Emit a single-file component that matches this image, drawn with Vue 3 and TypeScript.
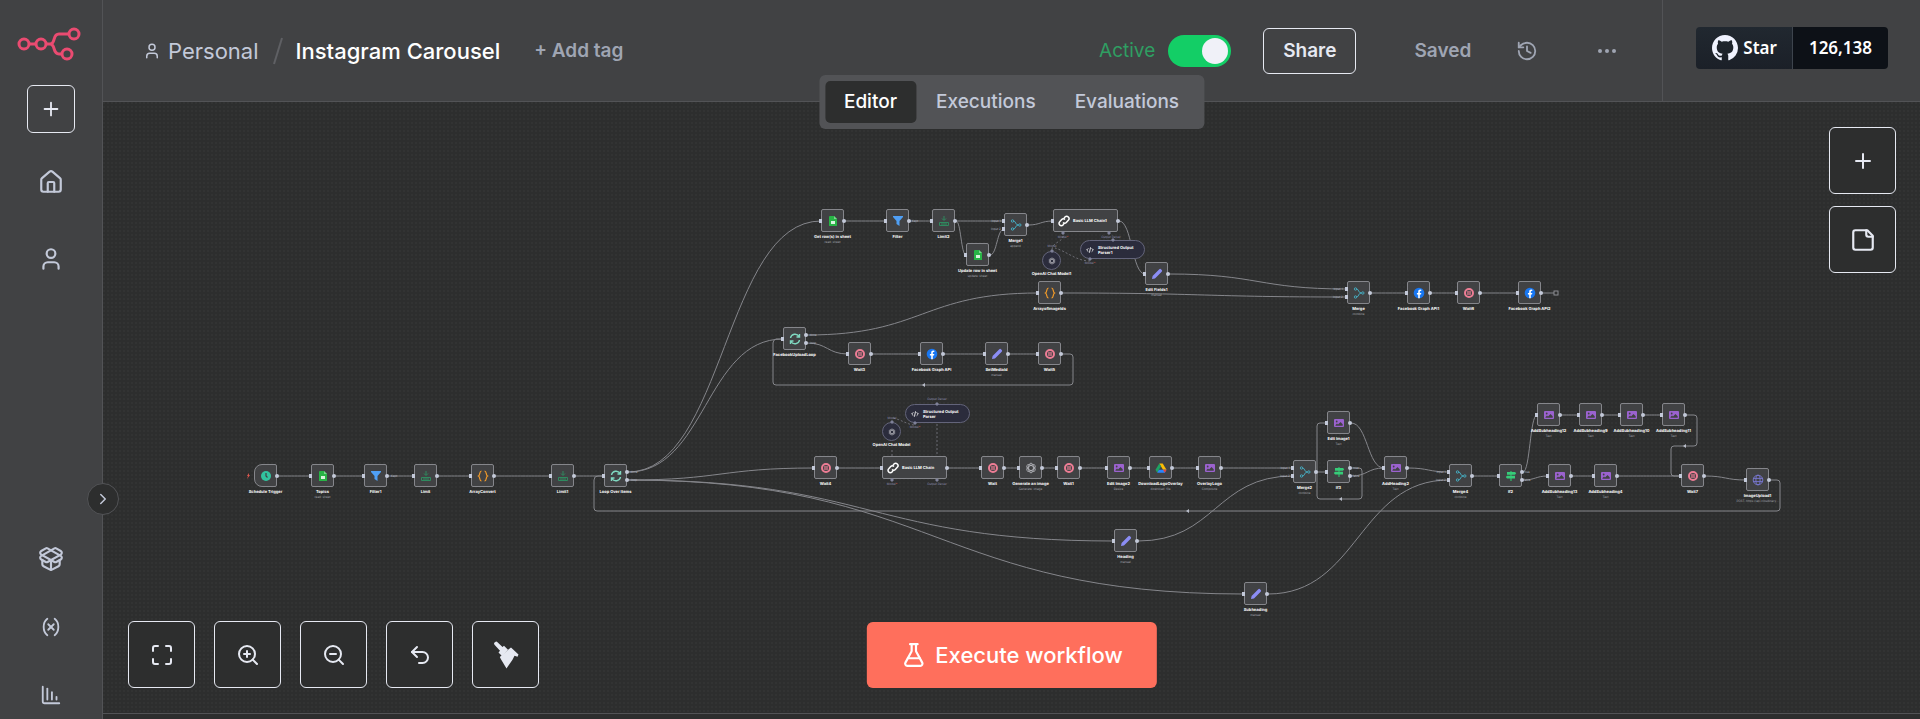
<script setup lang="ts">
import { computed, ref } from 'vue'

type Shape = 'box' | 'trigger' | 'wide' | 'circle' | 'pill'

interface FlowNode {
  id: string
  x: number
  y: number
  icon: string
  label: string
  sub?: string
  shape?: Shape
  ins?: number[]
  outs?: number[]
}

interface Edge {
  from: string
  to: string
  out?: number
  into?: number
}

interface Caption {
  x: number
  y: number
  text: string
  required?: boolean
}

const active = ref(true)
const tab = ref('Editor')
const tabs: string[] = ['Editor', 'Executions', 'Evaluations']

const icons: Record<string, string[]> = {
  plus: ['M5 12h14', 'M12 5v14'],
  home: [
    'M15 21v-8a1 1 0 0 0-1-1h-4a1 1 0 0 0-1 1v8',
    'M3 10a2 2 0 0 1 .709-1.528l7-5.999a2 2 0 0 1 2.582 0l7 5.999A2 2 0 0 1 21 10v9a2 2 0 0 1-2 2H5a2 2 0 0 1-2-2z',
  ],
  user: ['M19 21v-2a4 4 0 0 0-4-4H9a4 4 0 0 0-4 4v2', 'M8 7a4 4 0 1 0 8 0a4 4 0 1 0-8 0'],
  templates: [
    'M12 22v-9',
    'M15.17 2.21a1.67 1.67 0 0 1 1.63 0L21 4.57a1.93 1.93 0 0 1 0 3.36L8.82 14.79a1.655 1.655 0 0 1-1.64 0L3 12.43a1.93 1.93 0 0 1 0-3.36z',
    'M20 13v3.87a2.06 2.06 0 0 1-1.11 1.83l-6 3.08a1.93 1.93 0 0 1-1.78 0l-6-3.08A2.06 2.06 0 0 1 4 16.87V13',
    'M21 12.43a1.93 1.93 0 0 0 0-3.36L8.83 2.2a1.64 1.64 0 0 0-1.63 0L3 4.57a1.93 1.93 0 0 0 0 3.36l12.18 6.86a1.636 1.636 0 0 0 1.63 0z',
  ],
  variables: ['M8 21s-4-3-4-9 4-9 4-9', 'M16 3s4 3 4 9-4 9-4 9', 'M15 9l-6 6', 'M9 9l6 6'],
  insights: ['M13 17V9', 'M18 17v-3', 'M3 3v16a2 2 0 0 0 2 2h16', 'M8 17V5'],
  history: ['M3 12a9 9 0 1 0 9-9 9.75 9.75 0 0 0-6.74 2.74L3 8', 'M3 3v5h5', 'M12 7v5l4 2'],
  fit: [
    'M8 3H5a2 2 0 0 0-2 2v3',
    'M21 8V5a2 2 0 0 0-2-2h-3',
    'M3 16v3a2 2 0 0 0 2 2h3',
    'M16 21h3a2 2 0 0 0 2-2v-3',
  ],
  zoomIn: ['M3 11a8 8 0 1 0 16 0a8 8 0 1 0-16 0', 'M21 21l-4.35-4.35', 'M11 8v6', 'M8 11h6'],
  zoomOut: ['M3 11a8 8 0 1 0 16 0a8 8 0 1 0-16 0', 'M21 21l-4.35-4.35', 'M8 11h6'],
  undo: ['M9 14 4 9l5-5', 'M4 9h10.5a5.5 5.5 0 0 1 5.5 5.5a5.5 5.5 0 0 1-5.5 5.5H11'],
  note: ['M16 3H5a2 2 0 0 0-2 2v14a2 2 0 0 0 2 2h14a2 2 0 0 0 2-2V8Z', 'M15 3v4a2 2 0 0 0 2 2h4'],
  flask: [
    'M14 2v6a2 2 0 0 0 .245.96l5.51 10.08A2 2 0 0 1 18 22H6a2 2 0 0 1-1.755-2.96l5.51-10.08A2 2 0 0 0 10 8V2',
    'M6.453 15h11.094',
    'M8.5 2h7',
  ],
  chevron: ['M9 18l6-6-6-6'],
}

const topMenu = [
  { icon: 'home', label: 'Overview' },
  { icon: 'user', label: 'Personal' },
]
const bottomMenu = [
  { icon: 'templates', label: 'Templates' },
  { icon: 'variables', label: 'Variables' },
  { icon: 'insights', label: 'Insights' },
]
const controls = [
  { icon: 'fit', label: 'Zoom to fit' },
  { icon: 'zoomIn', label: 'Zoom in' },
  { icon: 'zoomOut', label: 'Zoom out' },
  { icon: 'undo', label: 'Reset zoom' },
]

const nodes: FlowNode[] = [
  { id: 'schedule', x: 266, y: 476, icon: 'clock', label: 'Schedule Trigger', shape: 'trigger', ins: [] },
  { id: 'topics', x: 323, y: 476, icon: 'sheet', label: 'Topics', sub: 'read: sheet' },
  { id: 'filter1', x: 376, y: 476, icon: 'filter', label: 'Filter1' },
  { id: 'limit', x: 426, y: 476, icon: 'limit', label: 'Limit' },
  { id: 'array', x: 483, y: 476, icon: 'braces', label: 'ArrayConvert' },
  { id: 'limit1', x: 563, y: 476, icon: 'limit', label: 'Limit1' },
  { id: 'loop', x: 616, y: 476, icon: 'loop', label: 'Loop Over Items', outs: [-4, 4] },

  { id: 'getrows', x: 833, y: 221, icon: 'sheet', label: 'Get row(s) in sheet', sub: 'read: sheet' },
  { id: 'filter', x: 898, y: 221, icon: 'filter', label: 'Filter' },
  { id: 'limit2', x: 944, y: 221, icon: 'limit', label: 'Limit2' },
  { id: 'update', x: 978, y: 255, icon: 'sheet', label: 'Update row in sheet', sub: 'update: sheet' },
  { id: 'merge1', x: 1016, y: 225, icon: 'merge', label: 'Merge1', sub: 'append', ins: [-4, 4] },
  { id: 'chain1', x: 1086, y: 221, icon: 'link', label: 'Basic LLM Chain1', shape: 'wide' },
  { id: 'model1', x: 1052, y: 261, icon: 'openai', label: 'OpenAI Chat Model1', shape: 'circle', ins: [], outs: [] },
  { id: 'parser1', x: 1113, y: 250, icon: 'code', label: 'Structured Output Parser1', shape: 'pill', ins: [], outs: [] },
  { id: 'fields1', x: 1157, y: 274, icon: 'pencil', label: 'Edit Fields1', sub: 'manual' },
  { id: 'arrayids', x: 1050, y: 293, icon: 'braces', label: 'ArrayofImageIds' },
  { id: 'merge', x: 1359, y: 293, icon: 'merge', label: 'Merge', sub: 'combine', ins: [-4, 4] },
  { id: 'fb1', x: 1419, y: 293, icon: 'facebook', label: 'Facebook Graph API1' },
  { id: 'wait6', x: 1469, y: 293, icon: 'pause', label: 'Wait6' },
  { id: 'fb2', x: 1530, y: 293, icon: 'facebook', label: 'Facebook Graph API2' },

  { id: 'fbloop', x: 795, y: 339, icon: 'loop', label: 'FacebookUploadLoop', outs: [-4, 4] },
  { id: 'wait3', x: 860, y: 354, icon: 'pause', label: 'Wait3' },
  { id: 'fb', x: 932, y: 354, icon: 'facebook', label: 'Facebook Graph API' },
  { id: 'media', x: 997, y: 354, icon: 'pencil', label: 'SetMediaId', sub: 'manual' },
  { id: 'wait5', x: 1050, y: 354, icon: 'pause', label: 'Wait5' },

  { id: 'parser', x: 938, y: 414, icon: 'code', label: 'Structured Output Parser', shape: 'pill', ins: [], outs: [] },
  { id: 'model', x: 892, y: 432, icon: 'openai', label: 'OpenAI Chat Model', shape: 'circle', ins: [], outs: [] },
  { id: 'wait4', x: 826, y: 468, icon: 'pause', label: 'Wait4' },
  { id: 'chain', x: 915, y: 468, icon: 'link', label: 'Basic LLM Chain', shape: 'wide' },
  { id: 'wait', x: 993, y: 468, icon: 'pause', label: 'Wait' },
  { id: 'generate', x: 1031, y: 468, icon: 'openai', label: 'Generate an image', sub: 'Generate: image' },
  { id: 'wait1', x: 1069, y: 468, icon: 'pause', label: 'Wait1' },
  { id: 'image2', x: 1119, y: 468, icon: 'image', label: 'Edit Image2', sub: 'Resize' },
  { id: 'drive', x: 1161, y: 468, icon: 'drive', label: 'DownloadLogoOverlay', sub: 'download: file' },
  { id: 'overlay', x: 1210, y: 468, icon: 'image', label: 'OverlayLogo', sub: 'Composite' },
  { id: 'merge2', x: 1305, y: 472, icon: 'merge', label: 'Merge2', sub: 'combine', ins: [-4, 4] },
  { id: 'image1', x: 1339, y: 423, icon: 'image', label: 'Edit Image1', sub: 'Text' },
  { id: 'if3', x: 1339, y: 472, icon: 'sign', label: 'If3', outs: [-4, 4] },
  { id: 'heading2', x: 1396, y: 468, icon: 'image', label: 'AddHeading2', sub: 'Text' },
  { id: 'merge4', x: 1461, y: 476, icon: 'merge', label: 'Merge4', sub: 'combine', ins: [-4, 4] },
  { id: 'if', x: 1511, y: 476, icon: 'sign', label: 'If2', outs: [-4, 4] },
  { id: 'sub10', x: 1549, y: 415, icon: 'image', label: 'AddSubheading12', sub: 'Text' },
  { id: 'sub9', x: 1591, y: 415, icon: 'image', label: 'AddSubheading9', sub: 'Text' },
  { id: 'sub12', x: 1632, y: 415, icon: 'image', label: 'AddSubheading10', sub: 'Text' },
  { id: 'sub11', x: 1674, y: 415, icon: 'image', label: 'AddSubheading11', sub: 'Text' },
  { id: 'sub13', x: 1560, y: 476, icon: 'image', label: 'AddSubheading13', sub: 'Text' },
  { id: 'sub4', x: 1606, y: 476, icon: 'image', label: 'AddSubheading4', sub: 'Text' },
  { id: 'wait7', x: 1693, y: 476, icon: 'pause', label: 'Wait7' },
  { id: 'upload', x: 1758, y: 480, icon: 'globe', label: 'ImageUpload1', sub: 'POST: https://api.cloudinary...' },
  { id: 'heading', x: 1126, y: 541, icon: 'pencil', label: 'Heading', sub: 'manual' },
  { id: 'subheading', x: 1256, y: 594, icon: 'pencil', label: 'Subheading', sub: 'manual' },
]

const edges: Edge[] = [
  { from: 'schedule', to: 'topics' },
  { from: 'topics', to: 'filter1' },
  { from: 'filter1', to: 'limit' },
  { from: 'limit', to: 'array' },
  { from: 'array', to: 'limit1' },
  { from: 'limit1', to: 'loop' },
  { from: 'loop', to: 'getrows', out: -4 },
  { from: 'loop', to: 'fbloop', out: -4 },
  { from: 'loop', to: 'wait4', out: 4 },
  { from: 'loop', to: 'heading', out: 4 },
  { from: 'loop', to: 'subheading', out: 4 },
  { from: 'getrows', to: 'filter' },
  { from: 'filter', to: 'limit2' },
  { from: 'limit2', to: 'merge1', into: -4 },
  { from: 'limit2', to: 'update' },
  { from: 'update', to: 'merge1', into: 4 },
  { from: 'merge1', to: 'chain1' },
  { from: 'chain1', to: 'fields1' },
  { from: 'fields1', to: 'merge', into: -4 },
  { from: 'arrayids', to: 'merge', into: 4 },
  { from: 'merge', to: 'fb1' },
  { from: 'fb1', to: 'wait6' },
  { from: 'wait6', to: 'fb2' },
  { from: 'fbloop', to: 'arrayids', out: -4 },
  { from: 'fbloop', to: 'wait3', out: 4 },
  { from: 'wait3', to: 'fb' },
  { from: 'fb', to: 'media' },
  { from: 'media', to: 'wait5' },
  { from: 'wait4', to: 'chain' },
  { from: 'chain', to: 'wait' },
  { from: 'wait', to: 'generate' },
  { from: 'generate', to: 'wait1' },
  { from: 'wait1', to: 'image2' },
  { from: 'image2', to: 'drive' },
  { from: 'drive', to: 'overlay' },
  { from: 'overlay', to: 'merge2', into: -4 },
  { from: 'heading', to: 'merge2', into: 4 },
  { from: 'merge2', to: 'if3' },
  { from: 'image1', to: 'heading2' },
  { from: 'if3', to: 'heading2', out: 4 },
  { from: 'heading2', to: 'merge4', into: -4 },
  { from: 'subheading', to: 'merge4', into: 4 },
  { from: 'merge4', to: 'if' },
  { from: 'if', to: 'sub10', out: -4 },
  { from: 'if', to: 'sub13', out: 4 },
  { from: 'sub10', to: 'sub9' },
  { from: 'sub9', to: 'sub12' },
  { from: 'sub12', to: 'sub11' },
  { from: 'sub13', to: 'sub4' },
  { from: 'sub4', to: 'wait7' },
  { from: 'wait7', to: 'upload' },
]

/* Edges that run backwards or turn corners */
const routed: string[] = [
  'M1770 480H1777Q1780 480 1780 483V508Q1780 511 1777 511H597Q594 511 594 508V480Q594 476 598 476H604',
  'M1062 354H1070Q1073 354 1073 357V382Q1073 385 1070 385H776Q773 385 773 382V343Q773 340 776 339H783',
  'M1351 468H1359Q1362 468 1362 471V496Q1362 499 1359 499H1320Q1317 499 1317 496V472',
  'M1317 472V426Q1317 423 1320 423H1327',
  'M1686 415H1694Q1697 415 1697 418V443Q1697 446 1694 446H1674Q1671 446 1671 449V473Q1671 476 1674 476H1681',
  'M1542 293H1554',
]

const dashed: string[] = [
  'M1063 236C1063 242 1052 242 1052 250',
  'M1090 261C1076 261 1066 251 1055 248',
  'M937 424V456',
  'M892 450V456',
  'M914 425C906 424 902 420 893 418',
]

const arrows = [
  { x: 1188, y: 511 },
  { x: 924, y: 385 },
  { x: 1341, y: 499 },
  { x: 1685, y: 446 },
]

const diamonds = [
  { x: 1063, y: 233 },
  { x: 1109, y: 233 },
  { x: 1113, y: 240 },
  { x: 1090, y: 259 },
  { x: 1052, y: 251 },
  { x: 892, y: 480 },
  { x: 937, y: 480 },
  { x: 937, y: 404 },
  { x: 915, y: 423 },
  { x: 892, y: 422 },
]

const aiCaptions: Caption[] = [
  { x: 1063, y: 238, text: 'Model', required: true },
  { x: 1111, y: 238, text: 'Output Parser' },
  { x: 1090, y: 264, text: 'Model', required: true },
  { x: 1052, y: 247, text: 'Model' },
  { x: 892, y: 485, text: 'Model', required: true },
  { x: 937, y: 485, text: 'Output Parser' },
  { x: 937, y: 400, text: 'Output Parser' },
  { x: 915, y: 428, text: 'Model', required: true },
  { x: 892, y: 419, text: 'Model' },
]

const portCaptions: Caption[] = [
  { x: 996, y: 222, text: 'Input 1' },
  { x: 996, y: 230, text: 'Input 2' },
  { x: 1338, y: 290, text: 'Input 1' },
  { x: 1338, y: 298, text: 'Input 2' },
  { x: 1285, y: 469, text: 'Input 1' },
  { x: 1285, y: 477, text: 'Input 2' },
  { x: 1441, y: 473, text: 'Input 1' },
  { x: 1441, y: 481, text: 'Input 2' },
  { x: 634, y: 473, text: 'done' },
  { x: 634, y: 481, text: 'loop' },
  { x: 813, y: 336, text: 'done' },
  { x: 813, y: 344, text: 'loop' },
  { x: 1356, y: 469, text: 'true' },
  { x: 1356, y: 477, text: 'false' },
  { x: 1527, y: 473, text: 'true' },
  { x: 1527, y: 481, text: 'false' },
  { x: 394, y: 477, text: 'Kept' },
  { x: 915, y: 222, text: 'Kept' },
]

const sizes: Record<Shape, [number, number]> = {
  box: [23, 23],
  trigger: [23, 23],
  wide: [65, 23],
  circle: [19, 19],
  pill: [65, 19],
}

const byId = new Map(nodes.map((n) => [n.id, n]))
const half = (n: FlowNode): number => Math.ceil(sizes[n.shape ?? 'box'][0] / 2)

function curve(e: Edge): string {
  const a = byId.get(e.from)!
  const b = byId.get(e.to)!
  const x1 = a.x + half(a)
  const y1 = a.y + (e.out ?? 0)
  const x2 = b.x - half(b)
  const y2 = b.y + (e.into ?? 0)
  const mid = (x1 + x2) / 2
  return `M${x1} ${y1}C${mid} ${y1} ${mid} ${y2} ${x2} ${y2}`
}

const paths = computed(() => [...edges.map(curve), ...routed])

/* Pan of the canvas inside the page */
const pan = { x: -103, y: -102 }
const panStyle = { transform: `translate(${pan.x}px, ${pan.y}px)` }

function place(n: FlowNode) {
  const [w, h] = sizes[n.shape ?? 'box']
  return { left: `${n.x - Math.ceil(w / 2)}px`, top: `${n.y - Math.ceil(h / 2)}px`, width: `${w}px`, height: `${h}px` }
}

const portTop = (offset: number) => ({ top: `calc(50% + ${offset}px)` })
</script>

<template>
  <div class="app">
    <svg class="defs" aria-hidden="true">
      <symbol id="i-clock" viewBox="0 0 12 12"><circle cx="6" cy="6" r="5" fill="#31c49f" /><path d="M6 3v3l1.500 1.500" fill="none" stroke="#414244" stroke-width="1.200" /></symbol>
      <symbol id="i-sheet" viewBox="0 0 12 12"><path d="M3 1h4l3 3v6.500a.5.5 0 0 1-.5.5h-7a.5.5 0 0 1-.5-.5V1.500z" fill="#28b446" /><path d="M7 1l3 3H7z" fill="#7bd48d" /><path d="M4 6h4v3H4z" fill="#d9f4de" /></symbol>
      <symbol id="i-filter" viewBox="0 0 12 12"><path d="M1 1h10v1L7.500 6v5L4.500 9V6L1 2z" fill="#4f9ff5" /></symbol>
      <symbol id="i-limit" viewBox="0 0 12 12"><path d="M6 1v4M4 3.500l2 2 2-2M1.500 10.500v-3h9v3M4 8v2M6 8v2M8 8v2M1.500 10.500h9" fill="none" stroke="#2f8a5f" /></symbol>
      <symbol id="i-braces" viewBox="0 0 12 12"><path d="M4.500 1C2 1 3.500 5 1.500 6c2 1 .5 5 3 5M7.500 1c2.500 0 1 4 3 5-2 1-.5 5-3 5" fill="none" stroke="#f09a2a" stroke-width="1.200" /></symbol>
      <symbol id="i-loop" viewBox="0 0 12 12"><path d="M1.500 5a4.600 4.600 0 0 1 8.500-1.500M10.500 1v3h-3M10.500 7A4.600 4.600 0 0 1 2 8.500M1.500 11V8h3" fill="none" stroke="#7fd8c0" stroke-width="1.400" /></symbol>
      <symbol id="i-merge" viewBox="0 0 12 12"><g fill="none" stroke="#45a9bd"><circle cx="2.500" cy="2" r="1.200" /><circle cx="2.500" cy="10" r="1.200" /><circle cx="9.800" cy="6" r="1.200" /><path d="M3.700 2C6 2 5 6 8.500 6M3.700 10C6 10 5 6 8.500 6" /></g></symbol>
      <symbol id="i-link" viewBox="0 0 12 12"><path d="M5 7.500a2.300 2.300 0 0 0 3.300 0l2-2.200A2.300 2.300 0 0 0 7 2L6 3M7 4.500a2.300 2.300 0 0 0-3.300 0l-2 2.200A2.300 2.300 0 0 0 5 10l1-1" fill="none" stroke="#fff" stroke-width="1.500" /></symbol>
      <symbol id="i-openai" viewBox="0 0 12 12"><g fill="none" stroke="#b9bac0" stroke-width=".8"><ellipse cx="6" cy="6" rx="2.400" ry="4.800" /><ellipse cx="6" cy="6" rx="2.400" ry="4.800" transform="rotate(60 6 6)" /><ellipse cx="6" cy="6" rx="2.400" ry="4.800" transform="rotate(120 6 6)" /></g></symbol>
      <symbol id="i-code" viewBox="0 0 12 12"><path d="M3.500 3.500L1 6l2.500 2.500M8.500 3.500L11 6 8.500 8.500M6.800 2L5.200 10" fill="none" stroke="#fff" stroke-width="1.300" /></symbol>
      <symbol id="i-pencil" viewBox="0 0 12 12"><path d="M1 11l.6-3L8.300 1.300a1.200 1.200 0 0 1 1.700 0l.7.7a1.200 1.200 0 0 1 0 1.700L4 10.400z" fill="#8b8df5" /></symbol>
      <symbol id="i-facebook" viewBox="0 0 12 12"><circle cx="6" cy="6" r="5.300" fill="#1877f2" /><path d="M5.200 11.200V7.400H3.900V5.900h1.300V4.800c0-1.500.8-2.200 2-2.200l1.100.1v1.400h-.7c-.6 0-.8.3-.8.8v1h1.500l-.3 1.500H6.800v3.800z" fill="#fff" /></symbol>
      <symbol id="i-pause" viewBox="0 0 12 12"><circle cx="6" cy="6" r="4" fill="none" stroke="#ee7d95" stroke-width="2" /><path d="M5 4v4M7 4v4" stroke="#ee7d95" stroke-width="1.200" /></symbol>
      <symbol id="i-image" viewBox="0 0 12 12"><rect x="1" y="2" width="10" height="8" rx="1" fill="#9b62cf" /><path d="M2.500 8.800V8l1.500-1.500 1 1L7.500 5 9.700 7.200v1.600z" fill="#414244" /><circle cx="3.700" cy="4.500" r=".9" fill="#414244" /></symbol>
      <symbol id="i-drive" viewBox="0 0 12 12"><path d="M4.300 1.500h3.400l3.800 6.300H8z" fill="#fbbc04" /><path d="M4.300 1.500L.5 7.800l1.700 2.900L6 4.300z" fill="#1ea362" /><path d="M3.900 7.800h7.600l-1.700 2.900H2.200z" fill="#2a84fc" /><path d="M8 7.800h3.500L9.800 10.700z" fill="#ea4335" /></symbol>
      <symbol id="i-sign" viewBox="0 0 12 12"><path d="M5.400 1h1.200v10H5.400z" fill="#2dbd6b" /><path d="M2 2h8l1.200 1.300L10 4.700H2zM10 5.800H2L.8 7.100 2 8.400h8z" fill="#36cc78" /></symbol>
      <symbol id="i-globe" viewBox="0 0 12 12"><g fill="none" stroke="#7a79d6" stroke-width=".9"><circle cx="6" cy="6" r="4.800" /><ellipse cx="6" cy="6" rx="2.100" ry="4.800" /><path d="M1.200 4.400h9.600M1.200 7.600h9.600" /></g></symbol>
    </svg>

    <aside class="sidebar">
      <a class="logo" href="#" aria-label="n8n home">
        <svg viewBox="17 27 65 34" width="65" height="34" fill="none" stroke="#ea4b71" stroke-width="3">
          <circle cx="24" cy="44" r="5" /><circle cx="41" cy="44" r="5" />
          <circle cx="74" cy="34" r="5" /><circle cx="67" cy="54" r="5" />
          <path d="M29 44h7M46 44h4C56 44 52 34 59 34h10M50 44C56 44 52 54 59 54h3" />
        </svg>
      </a>
      <button class="add" type="button" aria-label="Create">
        <svg class="icon s22" viewBox="0 0 24 24"><path v-for="d in icons.plus" :key="d" :d="d" /></svg>
      </button>
      <nav class="menu top">
        <a v-for="m in topMenu" :key="m.label" href="#" :aria-label="m.label">
          <svg class="icon s26" viewBox="0 0 24 24"><path v-for="d in icons[m.icon]" :key="d" :d="d" /></svg>
        </a>
      </nav>
      <nav class="menu bottom">
        <a v-for="m in bottomMenu" :key="m.label" href="#" :aria-label="m.label">
          <svg class="icon" :class="m.icon === 'templates' ? 's26' : 's22'" viewBox="0 0 24 24"><path v-for="d in icons[m.icon]" :key="d" :d="d" /></svg>
        </a>
      </nav>
      <button class="expand" type="button" aria-label="Expand menu">
        <svg class="icon s18" viewBox="0 0 24 24"><path v-for="d in icons.chevron" :key="d" :d="d" /></svg>
      </button>
    </aside>

    <div class="main">
      <header class="header">
        <a class="project" href="#">
          <svg class="icon s18" viewBox="0 0 24 24"><path v-for="d in icons.user" :key="d" :d="d" /></svg>
          Personal
        </a>
        <svg class="slash" viewBox="0 0 10 28" width="10" height="28"><path d="M1 27L9 1" stroke="#5f6064" stroke-width="2" /></svg>
        <h1 class="title">Instagram Carousel</h1>
        <button class="tag" type="button">+ Add tag</button>

        <div class="actions">
          <label class="active">
            Active
            <input v-model="active" type="checkbox" class="toggle" />
          </label>
          <button class="share" type="button">Share</button>
          <span class="saved">Saved</span>
          <button class="plain" type="button" aria-label="Workflow history">
            <svg class="icon s22" viewBox="0 0 24 24"><path v-for="d in icons.history" :key="d" :d="d" /></svg>
          </button>
          <button class="plain more" type="button" aria-label="More options">
            <svg viewBox="0 0 18 6" width="18" height="6" fill="#9fa5b3"><circle cx="2" cy="3" r="2" /><circle cx="9" cy="3" r="2" /><circle cx="16" cy="3" r="2" /></svg>
          </button>
        </div>

        <div class="github">
          <a class="star" href="#">
            <svg viewBox="0 0 16 16" width="26" height="26" fill="#f0f3ff"><path d="M8 0C3.580 0 0 3.580 0 8c0 3.540 2.290 6.530 5.470 7.590.4.070.55-.17.55-.38 0-.19-.01-.82-.01-1.490-2.010.37-2.530-.49-2.690-.94-.09-.23-.48-.94-.82-1.130-.28-.15-.68-.52-.01-.53.63-.01 1.080.58 1.230.82.72 1.210 1.870.87 2.330.66.07-.52.28-.87.51-1.070-1.780-.2-3.640-.89-3.640-3.950 0-.87.31-1.590.82-2.150-.08-.2-.36-1.020.08-2.120 0 0 .67-.21 2.200.82.64-.18 1.320-.27 2-.27s1.360.09 2 .27c1.530-1.040 2.200-.82 2.200-.82.44 1.100.16 1.920.08 2.120.51.56.82 1.270.82 2.150 0 3.070-1.870 3.750-3.650 3.950.29.25.54.73.54 1.480 0 1.070-.01 1.930-.01 2.200 0 .21.15.46.55.38A8.010 8.010 0 0 0 16 8c0-4.420-3.580-8-8-8z" /></svg>
            Star
          </a>
          <a class="count" href="#">126,138</a>
        </div>
      </header>

      <div class="tabs" role="tablist">
        <button v-for="t in tabs" :key="t" type="button" role="tab" :aria-selected="t === tab" :class="{ on: t === tab }" @click="tab = t">{{ t }}</button>
      </div>

      <main class="canvas">
        <div class="flow" :style="panStyle">
          <svg class="edges" width="1920" height="719">
            <path v-for="d in paths" :key="d" class="edge" :d="d" />
            <path v-for="d in dashed" :key="d" class="edge dash" :d="d" />
            <path v-for="a in arrows" :key="a.x" class="arrow" :d="`M${a.x - 2} ${a.y}l3 -2v4z`" />
            <rect class="endpoint" x="1554" y="291" width="4" height="4" />
            <path class="bolt" d="M249 473l-2 3h1l-1 3 3 -4h-1z" />
          </svg>

          <div v-for="n in nodes" :key="n.id" class="node" :class="n.shape ?? 'box'" :style="place(n)">
            <svg class="glyph"><use :href="`#i-${n.icon}`" /></svg>
            <span v-for="o in n.ins ?? [0]" :key="`i${o}`" class="port in" :style="portTop(o)"></span>
            <span v-for="o in n.outs ?? [0]" :key="`o${o}`" class="port out" :style="portTop(o)"></span>
            <span class="name">{{ n.label }}<small v-if="n.sub">{{ n.sub }}</small></span>
          </div>

          <svg class="edges" width="1920" height="719">
            <path v-for="p in diamonds" :key="`${p.x}-${p.y}`" class="diamond" :d="`M${p.x} ${p.y - 2}l2 2 -2 2 -2 -2z`" />
            <text v-for="c in aiCaptions" :key="`${c.x}-${c.y}`" class="cap ai" :x="c.x" :y="c.y">{{ c.text }}<tspan v-if="c.required" class="req">*</tspan></text>
            <text v-for="c in portCaptions" :key="`${c.x}-${c.y}`" class="cap" :x="c.x" :y="c.y">{{ c.text }}</text>
          </svg>
        </div>

        <div class="side-tools">
          <button class="tool" type="button" aria-label="Add node">
            <svg class="icon s24" viewBox="0 0 24 24"><path v-for="d in icons.plus" :key="d" :d="d" /></svg>
          </button>
          <button class="tool" type="button" aria-label="Add sticky note">
            <svg class="icon s26" viewBox="0 0 24 24"><path v-for="d in icons.note" :key="d" :d="d" /></svg>
          </button>
        </div>

        <div class="zoom-tools">
          <button v-for="c in controls" :key="c.label" class="tool" type="button" :aria-label="c.label">
            <svg class="icon s24" viewBox="0 0 24 24"><path v-for="d in icons[c.icon]" :key="d" :d="d" /></svg>
          </button>
          <button class="tool" type="button" aria-label="Tidy up">
            <svg width="26" height="28" viewBox="0 0 26 28" fill="#e6e9f2"><path d="M2 1.200a1.700 1.700 0 0 1 2.500 0L9.500 6l1.500-1.200 4 4L9 15 5.500 11.500 7 9.800 1.500 3.700a1.700 1.700 0 0 1 .5-2.500z" /><path d="M16 8l2-1.500 7.500 7-1 2.200-3-1-2 4-6 8.800L7.800 18l-1-2z" /></svg>
          </button>
        </div>

        <button class="execute" type="button">
          <svg class="icon s26" viewBox="0 0 24 24"><path v-for="d in icons.flask" :key="d" :d="d" /></svg>
          Execute workflow
        </button>
      </main>
      <footer class="logs"></footer>
    </div>
  </div>
</template>

<style>
body {
  margin: 0;
  background: #2d2e2e;
}
</style>

<style scoped>
.app {
  display: flex;
  height: 100vh;
  overflow: hidden;
  font-family: Inter, "Liberation Sans", sans-serif;
  color: #c3c9d9;
}
.defs {
  position: absolute;
  width: 0;
  height: 0;
}
button {
  font: inherit;
  color: inherit;
  background: none;
  border: 0;
  padding: 0;
  cursor: pointer;
}
a {
  color: inherit;
  text-decoration: none;
}
.icon {
  flex: none;
  fill: none;
  stroke: currentColor;
  stroke-width: 2;
  stroke-linecap: round;
  stroke-linejoin: round;
}
.s18 { width: 18px; height: 18px; }
.s22 { width: 22px; height: 22px; }
.s24 { width: 24px; height: 24px; }
.s26 { width: 26px; height: 26px; }

.sidebar {
  position: relative;
  z-index: 3;
  box-sizing: border-box;
  flex: none;
  display: flex;
  flex-direction: column;
  align-items: center;
  width: 103px;
  padding-top: 27px;
  background: #414244;
  border-right: 1px solid #525356;
}
.logo {
  height: 34px;
  margin-right: 4px;
}
.add {
  display: grid;
  place-items: center;
  box-sizing: border-box;
  width: 48px;
  height: 48px;
  margin-top: 24px;
  border: 1px solid #e6e9f2;
  border-radius: 6px;
  color: #e6e9f2;
}
.menu {
  display: flex;
  flex-direction: column;
}
.menu a {
  display: grid;
  place-items: center;
  width: 48px;
  height: 48px;
}
.menu.top {
  gap: 29px;
  margin-top: 25px;
}
.menu.bottom {
  gap: 20px;
  margin-top: auto;
}
.expand {
  position: absolute;
  top: 483px;
  right: -17px;
  display: grid;
  place-items: center;
  box-sizing: border-box;
  width: 32px;
  height: 32px;
  background: #2d2e2e;
  border: 1px solid #525356;
  border-radius: 50%;
}

.main {
  position: relative;
  flex: 1;
  min-width: 0;
  display: flex;
  flex-direction: column;
}
.header {
  box-sizing: border-box;
  flex: none;
  display: flex;
  align-items: center;
  height: 102px;
  padding-left: 40px;
  background: #414244;
  border-bottom: 1px solid #525356;
}
.project {
  display: flex;
  align-items: center;
  gap: 7px;
  font-size: 22px;
}
.slash {
  margin: 0 13px 0 14px;
}
.title {
  margin: 0;
  font-size: 22px;
  font-weight: 500;
  color: #fff;
}
.tag {
  margin-left: 34px;
  font-size: 19px;
  font-weight: 600;
  color: #9fa5b3;
}
.actions {
  display: flex;
  align-items: center;
  margin-left: auto;
}
.active {
  display: flex;
  align-items: center;
  gap: 13px;
  font-size: 19px;
  color: #2f9e62;
}
.toggle {
  appearance: none;
  width: 63px;
  height: 32px;
  margin: 0;
  padding: 3px;
  box-sizing: border-box;
  border-radius: 16px;
  background: #6f7178;
  cursor: pointer;
}
.toggle::before {
  content: "";
  display: block;
  width: 26px;
  height: 26px;
  border-radius: 50%;
  background: #f0f1f8;
}
.toggle:checked {
  background: #13ce66;
}
.toggle:checked::before {
  margin-left: auto;
}
.share {
  box-sizing: border-box;
  height: 46px;
  margin-left: 32px;
  padding: 0 19px;
  border: 1px solid #e6e9f2;
  border-radius: 6px;
  font-size: 19px;
  font-weight: 600;
  color: #e6e9f2;
}
.saved {
  margin-left: 58px;
  font-size: 19px;
  font-weight: 600;
  color: #9fa5b3;
}
.plain {
  display: grid;
  place-items: center;
  margin-left: 45px;
  color: #9fa5b3;
}
.plain.more {
  margin: 0 46px 0 60px;
}
.github {
  display: flex;
  align-items: center;
  align-self: stretch;
  padding: 0 32px 6px 33px;
  border-left: 1px solid #525356;
  font: 600 17px/42px "Noto Sans", "Open Sans", sans-serif;
  color: #fff;
}
.star {
  display: flex;
  align-items: center;
  gap: 5px;
  box-sizing: border-box;
  height: 42px;
  padding: 0 15px 0 16px;
  background: linear-gradient(#212830, #1b2028);
  border-right: 1px solid #3d444d;
  border-radius: 4px 0 0 4px;
}
.count {
  height: 42px;
  padding: 0 16px;
  background: #0d1117;
  border-radius: 0 4px 4px 0;
}

.tabs {
  position: absolute;
  z-index: 2;
  top: 75px;
  left: 50%;
  display: flex;
  gap: 1px;
  padding: 6px;
  background: #525356;
  border-radius: 6px;
  transform: translateX(-50%);
}
.tabs button {
  padding: 0 19px;
  border-radius: 5px;
  font-size: 19px;
  line-height: 42px;
  font-weight: 500;
  color: #c3c9d9;
}
.tabs .on {
  background: #2d2e2e;
  color: #fff;
}

.canvas {
  position: relative;
  flex: 1;
  overflow: hidden;
  background: #2d2e2e radial-gradient(circle at 1px 1px, #323333 1px, transparent 1px) 0 0 / 4px 4px;
}
.flow {
  position: absolute;
  top: 0;
  left: 0;
}
.edges {
  position: absolute;
  top: 0;
  left: 0;
  pointer-events: none;
}
.edge {
  fill: none;
  stroke: #85868b;
  stroke-width: 1;
}
.dash {
  stroke: #6c6c74;
  stroke-dasharray: 2 2;
}
.arrow {
  fill: #b9bdc9;
}
.endpoint {
  fill: #2d2e2e;
  stroke: #8d8e93;
}
.bolt {
  fill: #e0574f;
}
.diamond {
  fill: #7f8199;
}
.cap {
  font-size: 3px;
  text-anchor: middle;
  text-rendering: geometricPrecision;
  fill: #b4b8c4;
}
.cap.ai {
  fill: #8d8fae;
}
.req {
  fill: #ff5a4f;
}
.node {
  position: absolute;
  box-sizing: border-box;
  display: grid;
  place-items: center;
  background: #414244;
  border: 1px solid #85868b;
  border-radius: 2px;
}
.node.trigger {
  border-radius: 8px 2px 2px 8px;
}
.glyph {
  width: 12px;
  height: 12px;
}
.circle,
.pill {
  background: #2b2c3c;
  border-color: #63647a;
}
.node.circle {
  border-radius: 50%;
}
.node.pill {
  border-radius: 10px;
}
.circle .glyph,
.pill .glyph {
  width: 8px;
  height: 8px;
}
.node.wide,
.node.pill {
  display: flex;
  align-items: center;
  gap: 3px;
  padding-left: 4px;
}
.node.pill {
  gap: 4px;
  padding-left: 5px;
}
.port {
  position: absolute;
  width: 4px;
  height: 4px;
  margin-top: -2px;
  background: #c3c9d9;
}
.port.in {
  left: -3px;
  width: 3px;
}
.port.out {
  right: -3px;
  border-radius: 50%;
}
.name {
  position: absolute;
  top: 24px;
  left: 50%;
  font-size: 4px;
  line-height: 6px;
  font-weight: 700;
  color: #fff;
  text-align: center;
  white-space: nowrap;
  text-rendering: geometricPrecision;
  transform: translateX(-50%);
}
.name small {
  display: block;
  font-size: 3px;
  line-height: 4px;
  font-weight: 400;
  color: #a6a8b0;
}
.circle .name {
  top: 19px;
}
.wide .name,
.pill .name {
  position: static;
  text-align: left;
  transform: none;
}
.pill .name {
  width: 40px;
  line-height: 5px;
  white-space: normal;
}

.tool {
  display: grid;
  place-items: center;
  box-sizing: border-box;
  width: 67px;
  height: 67px;
  background: #2d2e2e;
  border: 1px solid #e6e9f2;
  border-radius: 6px;
  color: #e6e9f2;
}
.side-tools {
  position: absolute;
  top: 25px;
  right: 24px;
  display: grid;
  gap: 12px;
}
.zoom-tools {
  position: absolute;
  bottom: 25px;
  left: 25px;
  display: flex;
  gap: 19px;
}
.execute {
  position: absolute;
  bottom: 25px;
  left: 50%;
  display: flex;
  align-items: center;
  gap: 9px;
  height: 66px;
  padding: 0 34px;
  background: #ff6f5c;
  border-radius: 6px;
  font-size: 22px;
  font-weight: 500;
  color: #fff;
  white-space: nowrap;
  transform: translateX(-50%);
}
.logs {
  flex: none;
  height: 5px;
  background: #2d2e2e;
  border-top: 1px solid #525356;
}
</style>
